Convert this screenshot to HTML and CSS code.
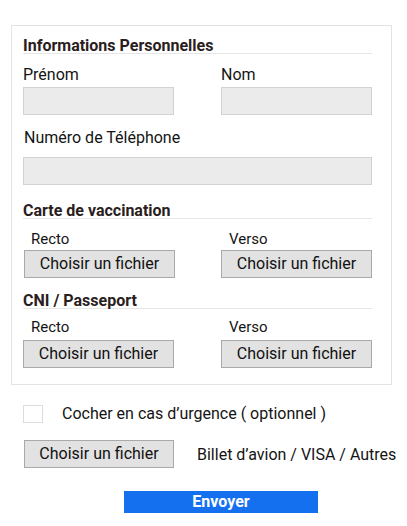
FILE: index.html
```html
<!DOCTYPE html>
<html lang="fr">
<head>
<meta charset="utf-8">
<title>Formulaire</title>
<link rel="stylesheet" href="styles.css">
</head>
<body>
<div class="page">
  <div class="card">
    <h3 class="section-title">Informations Personnelles</h3>
    <div class="row2 first-row">
      <div class="field">
        <label class="field-label">Prénom</label>
        <input class="text-input" type="text">
      </div>
      <div class="field">
        <label class="field-label">Nom</label>
        <input class="text-input" type="text">
      </div>
    </div>
    <label class="field-label phone-label">Numéro de Téléphone</label>
    <input class="text-input full" type="text">

    <h3 class="section-title section-vacc">Carte de vaccination</h3>
    <div class="row2 vacc-row">
      <div class="field">
        <span class="sub-label">Recto</span>
        <button class="file-btn shift" type="button">Choisir un fichier</button>
      </div>
      <div class="field">
        <span class="sub-label">Verso</span>
        <button class="file-btn" type="button">Choisir un fichier</button>
      </div>
    </div>

    <h3 class="section-title section-cni">CNI / Passeport</h3>
    <div class="row2 cni-row">
      <div class="field">
        <span class="sub-label">Recto</span>
        <button class="file-btn" type="button">Choisir un fichier</button>
      </div>
      <div class="field">
        <span class="sub-label">Verso</span>
        <button class="file-btn" type="button">Choisir un fichier</button>
      </div>
    </div>
  </div>

  <div class="check-row">
    <span class="checkbox"></span>
    <span class="check-label">Cocher en cas d’urgence ( optionnel )</span>
  </div>

  <div class="extra-row">
    <button class="file-btn extra-btn" type="button">Choisir un fichier</button>
    <span class="extra-label">Billet d’avion / VISA / Autres</span>
  </div>

  <button class="submit" type="button">Envoyer</button>
</div>
</body>
</html>
```

FILE: styles.css
```css
* { box-sizing: border-box; }

body {
  margin: 0;
  background: #fff;
  color: #141414;
  font-family: Roboto, "Liberation Sans", sans-serif;
}

.page {
  padding: 25px 15px 0 11px;
}

.card {
  border: 1px solid #e3e3e3;
  padding: 13px 19px 16px 11px;
}

.section-title {
  margin: 0;
  font-size: 16px;
  font-weight: 700;
  line-height: 14px;
  color: #2a1d1d;
  border-bottom: 1px solid #e6e6e6;
}

.section-vacc { margin-top: 19px; }
.section-cni { margin-top: 16px; }

.row2 {
  display: grid;
  grid-template-columns: 151px 151px;
  column-gap: 47px;
}

.field {
  display: flex;
  flex-direction: column;
  align-items: flex-start;
}

.field-label {
  display: block;
  font-size: 16px;
  line-height: 19px;
  margin-top: 11px;
  margin-bottom: 3px;
}

.phone-label {
  margin-top: 13px;
  margin-bottom: 10px;
  padding-left: 1px;
}

.text-input {
  display: block;
  width: 151px;
  height: 28px;
  margin: 0;
  background: #ebebeb;
  border: 1px solid #d2d2d2;
  border-radius: 0;
  font: inherit;
}

.text-input.full { width: 100%; }

.sub-label {
  display: block;
  font-size: 15px;
  line-height: 17px;
  padding-left: 8px;
}

.vacc-row .sub-label { margin-top: 12px; margin-bottom: 2px; }
.cni-row .sub-label { margin-top: 10px; margin-bottom: 4px; }

.file-btn {
  display: block;
  width: 151px;
  height: 28px;
  margin: 0;
  padding: 0;
  background: #e2e2e2;
  border: 1px solid #a9a9a9;
  border-radius: 0;
  color: #111;
  font-family: Roboto, "Liberation Sans", sans-serif;
  font-size: 16px;
  line-height: 26px;
  text-align: center;
}

.file-btn.shift { margin-left: 1px; }

.check-row {
  display: flex;
  align-items: center;
  margin-top: 19px;
  padding-left: 12px;
}

.checkbox {
  display: block;
  flex: none;
  width: 20px;
  height: 18px;
  border: 1px solid #dcdcdc;
  background: #fff;
}

.check-label {
  margin-left: 19px;
  font-size: 16px;
  line-height: 19px;
  white-space: nowrap;
}

.extra-row {
  display: flex;
  align-items: center;
  margin-top: 17px;
  padding-left: 13px;
}

.extra-btn { width: 150px; flex: none; }

.extra-label {
  margin-left: 23px;
  font-size: 16px;
  line-height: 19px;
  white-space: nowrap;
}

.submit {
  display: block;
  margin: 23px 0 0 113px;
  width: 194px;
  height: 22px;
  padding: 0;
  background: #1570ef;
  border: 0;
  border-radius: 0;
  color: #fff;
  font-family: Roboto, "Liberation Sans", sans-serif;
  font-size: 16px;
  font-weight: 700;
  line-height: 22px;
  text-align: center;
}
```
